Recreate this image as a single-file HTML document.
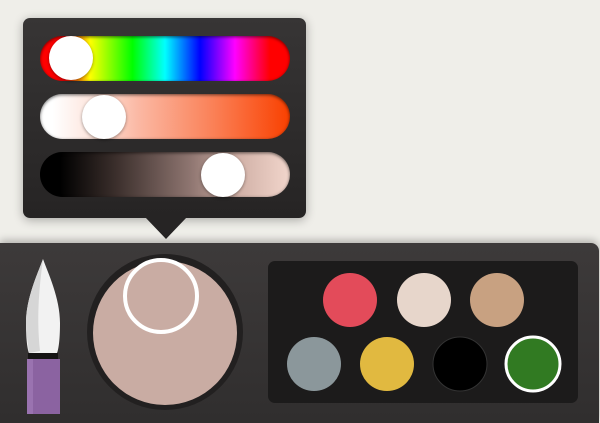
<!DOCTYPE html>
<html><head><meta charset="utf-8"><style>
*{margin:0;padding:0;box-sizing:border-box}
body{width:600px;height:414px;overflow:hidden;background:#efeee9;position:relative;font-family:"Liberation Sans",sans-serif}
.a{position:absolute}
.pop{left:23px;top:18px;width:283px;height:200px;background:linear-gradient(#373535,#262424);border-radius:7px;box-shadow:0 2px 10px rgba(0,0,0,.3)}
.sl{left:40px;width:250px;height:45px;border-radius:23px;box-shadow:inset 0 1px 3px rgba(0,0,0,.6)}
.k{width:44px;height:44px;border-radius:50%;background:#fff;box-shadow:0 1px 3px rgba(0,0,0,.4)}
.bar{left:0;top:243px;width:599px;height:180px;background:linear-gradient(#3d3a3a,#302e2e);border-radius:0 8px 0 0;box-shadow:0 -3px 8px rgba(0,0,0,.25)}
.sw{width:54px;height:54px;border-radius:50%;box-shadow:0 1px 2px rgba(0,0,0,.6)}
</style></head><body>
<div class="a pop"></div>
<div class="a" style="left:145px;top:217px;width:0;height:0;border-left:21px solid transparent;border-right:21px solid transparent;border-top:22px solid #262424"></div>
<div class="a sl" style="top:36px;background:linear-gradient(90deg,#f00 0%,#f00 10%,#ff0 20%,#0f0 37%,#0ff 50%,#00f 64%,#f0f 78%,#f00 92%,#f00)"></div>
<div class="a sl" style="top:94px;background:linear-gradient(90deg,#fff 5%,#fde6de 20%,#fbb7a2 40%,#fa7f55 70%,#f94000 100%)"></div>
<div class="a sl" style="top:152px;background:linear-gradient(90deg,#000 8%,#3a2e2b 30%,#8e7570 60%,#d2b2a8 80%,#f2d6cc 100%)"></div>
<div class="a k" style="left:49px;top:36px"></div>
<div class="a k" style="left:82px;top:95px"></div>
<div class="a k" style="left:201px;top:153px"></div>
<div class="a bar"></div>
<svg class="a" style="left:0;top:243px" width="600" height="171">
<path d="M43 16 C48 30 60 55 60 80 C60 100 58 108 57 110 L29 110 C28 108 26 100 26 80 C26 55 38 30 43 16Z" fill="#f2f2f2"/>
<path d="M43 16 C40 40 36 70 40 108 L29 110 C28 100 26 90 26 80 C26 55 38 30 43 16Z" fill="#d6d6d6"/>
<rect x="28" y="110" width="30" height="6" fill="#151414"/>
<rect x="27" y="116" width="33" height="60" fill="#8b63a1"/>
<rect x="27" y="116" width="6" height="60" fill="#9a73b0"/>
<circle cx="165" cy="89" r="78" fill="#222020"/>
<circle cx="165" cy="90" r="72" fill="#c9aca3"/>
<circle cx="161" cy="53" r="36" fill="none" stroke="#fff" stroke-width="4"/>
<rect x="268" y="18" width="310" height="142" rx="7" fill="#1c1b1b"/>
<circle cx="350" cy="57" r="27" fill="#e34b5a"/>
<circle cx="424" cy="57" r="27" fill="#e7d6cb"/>
<circle cx="497" cy="57" r="27" fill="#c8a181"/>
<circle cx="314" cy="121" r="27" fill="#8b979b"/>
<circle cx="387" cy="121" r="27" fill="#e1b940"/>
<circle cx="460" cy="121" r="27" fill="#000" stroke="#333" stroke-width="1"/>
<circle cx="533" cy="121" r="27" fill="#317a22" stroke="#fff" stroke-width="3"/>
</svg>
</body></html>
